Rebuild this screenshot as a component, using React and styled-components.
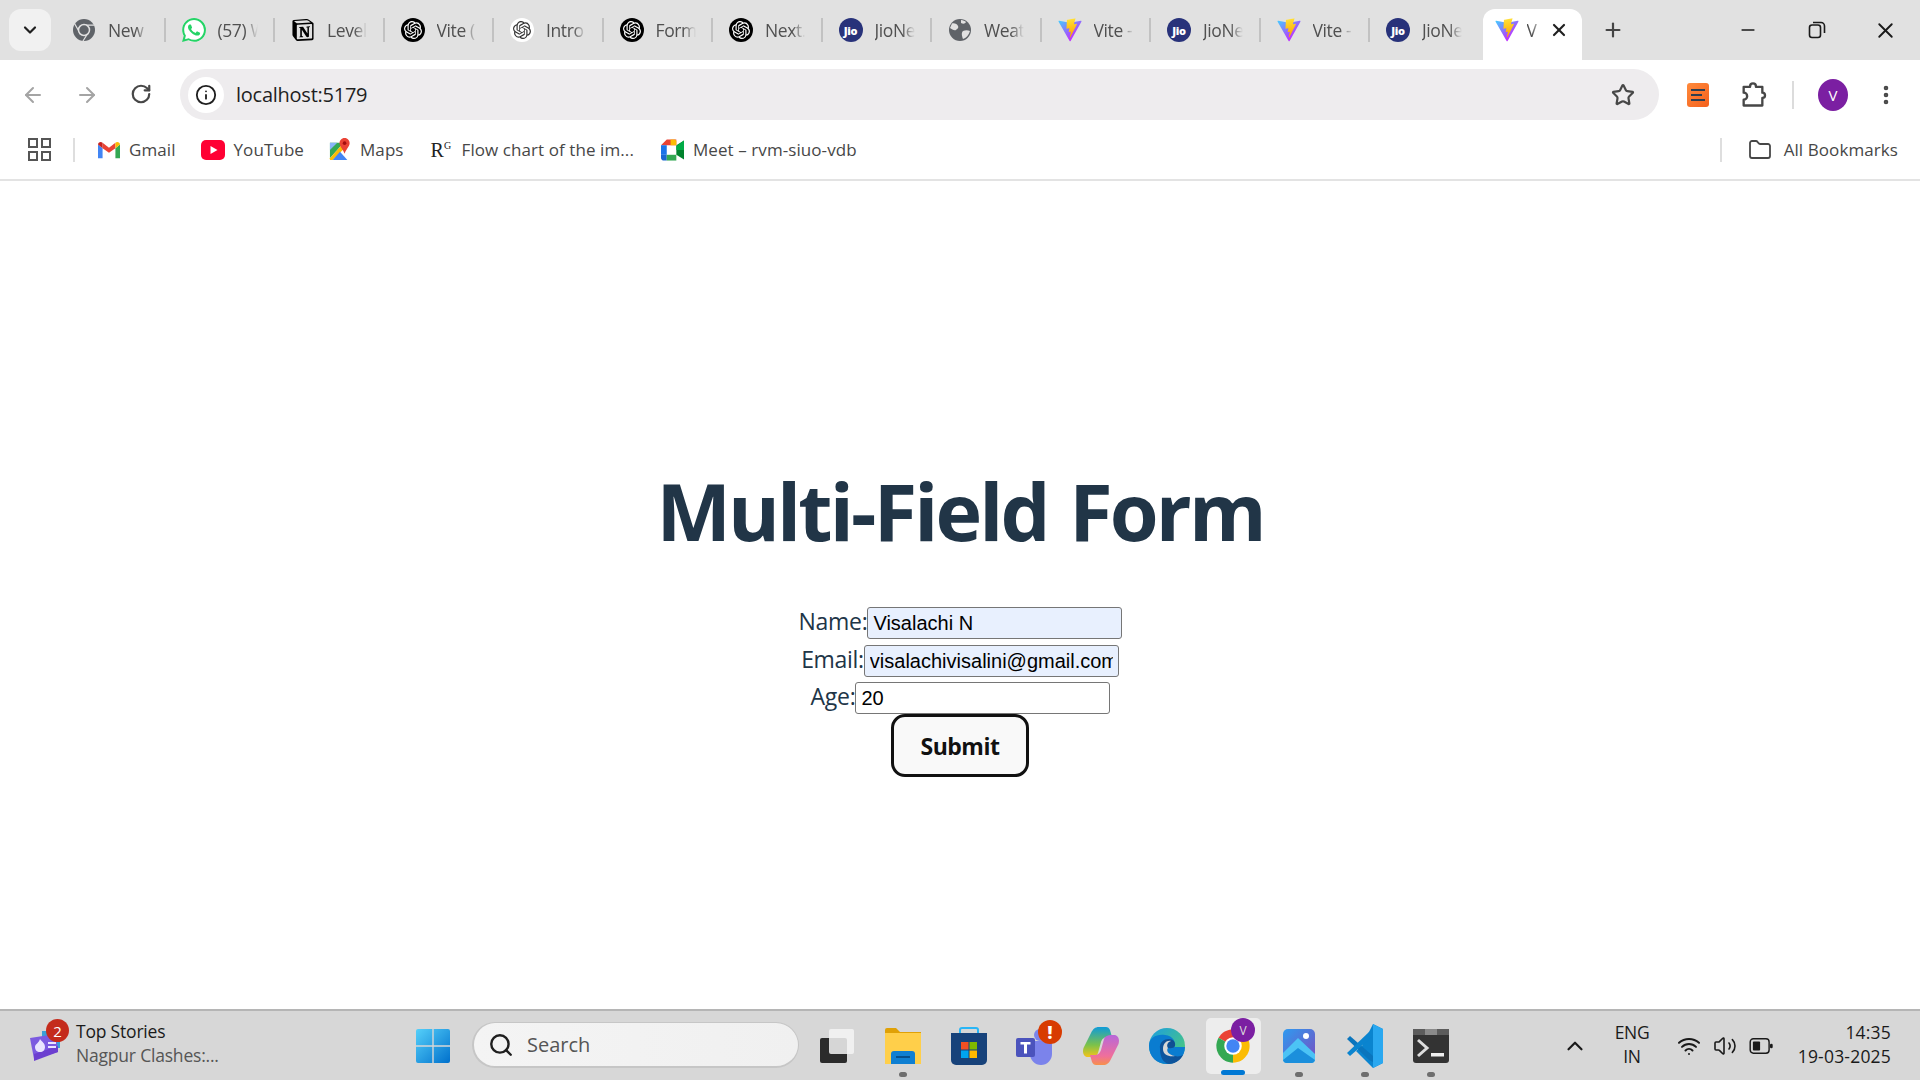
import React from 'react';
import styled, { createGlobalStyle } from 'styled-components';
import { ArrowLeft, ArrowRight, RotateCw, Star, Plus, X, Minus, ChevronDown, ChevronUp, Search, Wifi, Volume2, Info, Folder, MoreVertical } from 'lucide-react';
import { SiNotion, SiOpenai, SiWhatsapp } from 'react-icons/si';

const UI = '"Open Sans", "Noto Sans", sans-serif';

const Global = createGlobalStyle`
  html, body { margin: 0; padding: 0; background: #fff; overflow: hidden; }
  * { box-sizing: border-box; }
  body { font-family: ${UI}; }
`;

const Page = styled.div`
  width: 1920px; height: 1080px; display: flex; flex-direction: column; background: #fff;
`;

/* ---------- tab strip ---------- */
const TabStrip = styled.div`
  height: 60px; background: #e1e1e1; display: flex; align-items: flex-end; padding-left: 9px; flex: none;
`;
const Collapse = styled.div`
  width: 42px; height: 42px; margin: 0 5px 9px 0; border-radius: 12px; background: #f1f1f1;
  display: flex; align-items: center; justify-content: center; color: #1f1f1f;
`;
const Tab = styled.div`
  width: 107.5px; height: 60px; display: flex; align-items: center; padding: 0 0 0 16px; gap: 12px; flex: none;
`;
const TabSep = styled.div`
  width: 2px; height: 24px; margin-bottom: 18px; background: #c2c2c2; flex: none;
`;
const Fav = styled.span`
  width: 24px; height: 24px; flex: none; display: flex; align-items: center; justify-content: center; border-radius: 50%;
  background: ${p => p.$bg || 'transparent'}; color: ${p => p.$color || '#000'};
`;
const TabTitle = styled.span`
  width: 40px; overflow: hidden; white-space: nowrap; font-size: 17.5px; letter-spacing: -0.4px; color: #505050;
  -webkit-mask-image: linear-gradient(to right, #000 68%, transparent 100%);
  mask-image: linear-gradient(to right, #000 68%, transparent 100%);
`;
const JioMark = styled.span`
  font-size: 11px; font-weight: 800; color: #fff; letter-spacing: -0.3px; font-family: ${UI};
`;
const ActiveTab = styled.div`
  width: 99px; height: 51px; margin-left: 5px; background: #fff; border-radius: 12px 12px 0 0; display: flex; align-items: center;
  padding: 0 0 9px 12px; flex: none; color: #1f1f1f;
`;
const ActiveTitle = styled.span`
  width: 17px; margin-left: 8px; font-size: 17.5px; color: #505050; overflow: hidden;
  -webkit-mask-image: linear-gradient(to right, #000 30%, transparent 80%);
  mask-image: linear-gradient(to right, #000 30%, transparent 80%);
`;
const TabClose = styled.span`
  display: flex; margin-left: 5px;
`;
const NewTab = styled.span`
  display: flex; margin-left: 20px; margin-bottom: 19px; color: #444;
`;
const WinControls = styled.div`
  margin-left: auto; display: flex; align-self: stretch; align-items: center; color: #1a1a1a;
`;
const WinBtn = styled.span`
  width: 69px; display: flex; justify-content: center; align-items: center;
`;

/* ---------- toolbar ---------- */
const Toolbar = styled.div`
  height: 69px; display: flex; align-items: center; background: #fff; flex: none;
`;
const NavBtn = styled.span`
  width: 54px; display: flex; justify-content: center; color: ${p => p.$dim ? '#a4a4a4' : '#474747'};
`;
const NavGroup = styled.div`
  display: flex; width: 180px; padding-left: 6px; flex: none;
`;
const Omnibox = styled.div`
  width: 1479px; height: 51px; border-radius: 26px; background: #eeecee; display: flex; align-items: center; padding-left: 8px; flex: none;
`;
const InfoBubble = styled.span`
  width: 36px; height: 36px; border-radius: 50%; background: #fff; display: flex; justify-content: center; align-items: center; color: #1f1f1f;
`;
const Url = styled.span`
  margin-left: 12px; font-size: 20px; letter-spacing: -0.25px; color: #1f1f1f;
`;
const StarBtn = styled.span`
  margin-left: auto; margin-right: 24px; display: flex; color: #474747;
`;
const ToolIcons = styled.div`
  flex: 1; display: flex; align-items: center; color: #474747; padding-left: 28px;
`;
const ExtOrange = styled.span`
  width: 22px; height: 24px; border-radius: 3px; background: linear-gradient(135deg, #ff8a3c, #f4601c); display: flex; flex-direction: column; justify-content: center; gap: 3px; padding: 0 4px;
`;
const ExtLine = styled.i`
  display: block; height: 2px; width: ${p => p.$w}px; background: #2c3e50;
`;
const ToolSep = styled.span`
  width: 2px; height: 28px; background: #dcdcdc; margin: 0 24px 0 25px;
`;
const ExtPuzzle = styled.span`
  display: flex; margin-left: 30px;
`;
const Avatar = styled.span`
  width: 30px; height: 32px; border-radius: 50%; background: #7b1fa2; color: #fff; font-size: 15px; display: flex; align-items: center; justify-content: center;
`;
const Dots = styled.span`
  display: flex; margin-left: 26px; color: #474747;
`;

/* ---------- bookmarks ---------- */
const Bookmarks = styled.div`
  height: 52px; display: flex; align-items: center; background: #fff; border-bottom: 2px solid #e3e3e3; flex: none; padding: 0 22px 9px 28px;
`;
const AppsGrid = styled.span`
  display: grid; grid-template-columns: 10px 10px; grid-gap: 3px; margin-right: 22px;
`;
const AppsCell = styled.i`
  display: block; width: 10px; height: 10px; border: 2px solid #555;
`;
const BmSep = styled.span`
  width: 2px; height: 24px; background: #dedede; margin-right: ${p => p.$mr || 23}px;
`;
const Bm = styled.span`
  display: flex; align-items: center; gap: ${p => p.$gap || 9}px; margin-right: ${p => p.$mr || 0}px; font-size: 17px; letter-spacing: 0.08px; color: #474747; white-space: nowrap;
`;
const RG = styled.span`
  font-family: "Liberation Serif", serif; font-size: 20px; color: #222; letter-spacing: 0; line-height: 1; width: 22px;
`;
const RGSup = styled.sup`
  font-size: 10px; vertical-align: 8px; line-height: 0;
`;
const AllBm = styled.span`
  margin-left: auto; display: flex; align-items: center;
`;

/* ---------- page content ---------- */
const Main = styled.main`
  flex: 1; display: flex; flex-direction: column; align-items: center; padding-top: 286px; background: #fff; color: #213547;
`;
const Title = styled.h1`
  margin: 0 0 52px; font-size: 79px; line-height: 88px; font-weight: 700; letter-spacing: -2.85px; word-spacing: 4px; color: #213547; font-family: ${UI};
`;
const Row = styled.div`
  display: flex; align-items: center; justify-content: center; height: 32px; margin-bottom: ${p => p.$mb}px; padding-left: ${p => p.$pl || 0}px;
`;
const Label = styled.label`
  font-size: 23px; letter-spacing: -0.3px; color: #213547; margin-top: -4px;
`;
const Input = styled.input`
  width: 255px; height: 32px; border: 1.25px solid #767676; border-radius: 3px; padding: 1px 5px; font-size: 20px; font-family: "Liberation Sans", Arial, sans-serif; color: #000; background: ${p => p.$filled ? '#e8f0fe' : '#fff'}; outline: none;
`;
const SubmitBtn = styled.button`
  width: 138px; height: 63px; border: 3px solid #111; border-radius: 14px; background: #f9f9f9; font-size: 23px; font-weight: 700; letter-spacing: -0.5px; color: #111; font-family: ${UI}; padding: 0; flex: none;
`;

/* ---------- taskbar ---------- */
const Taskbar = styled.footer`
  height: 71px; background: #d7d7d7; border-top: 2px solid #b5b5b5; display: flex; align-items: center; flex: none;
`;
const Widget = styled.div`
  width: 400px; flex: none; display: flex; align-items: center; padding-left: 28px; position: relative;
`;
const WidgetBadge = styled.span`
  position: absolute; left: 46px; top: -5px; width: 23px; height: 23px; border-radius: 50%; background: #c42b1c; color: #fff; font-size: 15px; display: flex; align-items: center; justify-content: center;
`;
const WidgetText = styled.div`
  margin: -5px 0 0 12px; display: flex; flex-direction: column; line-height: 24px; font-size: 17.5px; letter-spacing: -0.2px;
`;
const WidgetTop = styled.span`
  color: #1a1a1a;
`;
const WidgetSub = styled.span`
  color: #555;
`;
const Slot = styled.div`
  width: 66px; height: 69px; flex: none; display: flex; align-items: center; justify-content: center; position: relative;
`;
const ActiveBg = styled.div`
  width: 55px; height: 56px; border-radius: 5px; background: #ededed; display: flex; align-items: center; justify-content: center;
`;
const SearchPill = styled.div`
  width: 327px; height: 46px; margin: -1px 5px 0 6px; border-radius: 23px; background: linear-gradient(to right, #f4f4f4, #f0f0f0); border-style: solid; border-color: #c6c6c6; border-width: 1px 1px 2px 2px; display: flex; align-items: center; padding-left: 14px; gap: 13px; font-size: 20px; color: #555; flex: none;
`;
const Dot = styled.i`
  position: absolute; bottom: 3px; left: 50%; margin-left: -4px; width: 8px; height: 5px; border-radius: 3px; background: #6e6e6e;
`;
const ActiveDot = styled.i`
  position: absolute; bottom: 5px; left: 50%; margin-left: -12px; width: 24px; height: 5px; border-radius: 3px; background: #0078d4;
`;
const Alert = styled.span`
  position: absolute; left: 36px; top: 9px; width: 24px; height: 24px; border-radius: 50%; background: #d83b01; color: #fff; font-size: 17px; font-weight: 800; display: flex; align-items: center; justify-content: center;
`;
const ChromeBadge = styled.span`
  position: absolute; left: 31px; top: 7px; width: 24px; height: 24px; border-radius: 50%; background: #7b1fa2; color: #ddd; font-size: 12px; display: flex; align-items: center; justify-content: center;
`;
const Tray = styled.div`
  flex: 1; display: flex; align-items: center; color: #1a1a1a;
`;
const TrayChevron = styled.span`
  display: flex; margin-left: 98px;
`;
const Lang = styled.div`
  margin: -4px 0 0 24px; width: 40px; display: flex; flex-direction: column; align-items: center; font-size: 17.5px; line-height: 24px; letter-spacing: -0.3px;
`;
const TrayIcons = styled.div`
  margin-left: 25px; display: flex; align-items: center; gap: 12px;
`;
const Clock = styled.div`
  margin: -4px 0 0 auto; padding-right: 29px; display: flex; flex-direction: column; align-items: flex-end; font-size: 17.5px; line-height: 24px; letter-spacing: 0.2px;
`;

/* ---------- drawn logos ---------- */
const ViteLogo = ({ size = 24, id }) => (
  <svg width={size} height={size} viewBox="0 0 410 404">
    <defs>
      <linearGradient id={id + 'a'} x1="6" y1="33" x2="235" y2="344" gradientUnits="userSpaceOnUse"><stop stopColor="#41D1FF" /><stop offset="1" stopColor="#BD34FE" /></linearGradient>
      <linearGradient id={id + 'b'} x1="194" y1="8" x2="236" y2="293" gradientUnits="userSpaceOnUse"><stop stopColor="#FFEA83" /><stop offset=".08" stopColor="#FFDD35" /><stop offset="1" stopColor="#FFA800" /></linearGradient>
    </defs>
    <path d="M399.641 59.5246L215.643 388.545C211.844 395.338 202.084 395.378 198.228 388.618L10.5817 59.5563C6.38087 52.1896 12.6802 43.2665 21.0281 44.7586L205.223 77.6824C206.398 77.8924 207.601 77.8904 208.776 77.6763L389.119 44.8058C397.439 43.2894 403.768 52.1434 399.641 59.5246Z" fill={`url(#${id}a)`} />
    <path d="M292.965 1.5744L156.801 28.2552C154.563 28.6937 152.906 30.5903 152.771 32.8664L144.395 174.33C144.198 177.662 147.258 180.248 150.51 179.498L188.42 170.749C191.967 169.931 195.172 173.055 194.443 176.622L183.18 231.775C182.422 235.487 185.907 238.661 189.532 237.56L212.947 230.446C216.577 229.344 220.065 232.527 219.297 236.242L201.398 322.875C200.278 328.294 207.486 331.249 210.492 326.603L212.5 323.5L323.454 102.072C325.312 98.3645 322.108 94.137 318.036 94.9228L279.014 102.454C275.347 103.161 272.227 99.746 273.262 96.1583L298.731 7.86689C299.767 4.27314 296.636 0.855181 292.965 1.5744Z" fill={`url(#${id}b)`} />
  </svg>
);

const ChromeMark = ({ size = 24 }) => (
  <svg width={size} height={size} viewBox="0 0 48 48">
    <path d="M24 24 L6.7 14 A20 20 0 0 1 41.3 14 Z" fill="#ea4335" />
    <path d="M24 24 L6.7 14 A20 20 0 0 0 24 44 Z" fill="#34a853" />
    <path d="M24 24 L41.3 14 A20 20 0 0 1 24 44 Z" fill="#fbbc04" />
    <circle cx="24" cy="24" r="10.5" fill="#fff" />
    <circle cx="24" cy="24" r="8" fill="#4285f4" />
  </svg>
);

const ChromeGray = () => (
  <svg width="24" height="24" viewBox="0 0 48 48">
    <circle cx="24" cy="24" r="22" fill="#5f6368" />
    <path d="M24 14 H45 M15.3 29 L5 11 M32.7 29 L22 46" stroke="#e1e1e1" strokeWidth="2.5" />
    <circle cx="24" cy="24" r="11" fill="#5f6368" stroke="#e1e1e1" strokeWidth="3" />
  </svg>
);

const Puzzle = () => (
  <svg width="28" height="28" viewBox="0 0 24 24" fill="none" stroke="#474747" strokeWidth="2" strokeLinejoin="round">
    <path d="M4 5 H9.5 V4.5 a2.5 2.5 0 0 1 5 0 V5 H20 V10 a2.3 2.3 0 0 1 0 4.6 V21 H4 V16 a3 3 0 0 0 0-6 Z" />
  </svg>
);

const Globe = () => (
  <svg width="24" height="24" viewBox="0 0 24 24">
    <circle cx="12" cy="12" r="11" fill="#5f6368" />
    <path d="M4 5.5 C7 5 9 6 10 8 C11 10 9 11 8 12 C6 13 4 11 2 10 Z M15 13 C17 12 20 12 22 13 C21 17 18 20 15 21 C14 18 13 15 15 13 Z M13 2 C15 2 17 3 18 4 C17 6 15 6 13 5 Z" fill="#e1e1e1" />
  </svg>
);

const OpenAiFav = ({ invert }) => (
  <Fav $bg={invert ? '#fff' : '#000'} $color={invert ? '#333' : '#fff'}><SiOpenai size={18} /></Fav>
);
const Jio = () => <Fav $bg="#28327a"><JioMark>Jio</JioMark></Fav>;

const GmailLogo = () => (
  <svg width="22" height="18" viewBox="0 0 24 18">
    <path d="M0 3 L0 18 L5 18 L5 7 Z" fill="#4285f4" />
    <path d="M24 3 L24 18 L19 18 L19 7 Z" fill="#34a853" />
    <path d="M5 7 L12 12 L19 7 L19 1 L12 6.5 L5 1 Z" fill="#ea4335" />
    <path d="M0 3 C0 0.5 3 -0.5 5 1 L5 7 Z" fill="#c5221f" />
    <path d="M24 3 C24 0.5 21 -0.5 19 1 L19 7 Z" fill="#fbbc04" />
  </svg>
);
const YouTubeLogo = () => (
  <svg width="24" height="20" viewBox="0 0 24 20">
    <rect width="24" height="20" rx="5" fill="#ff0033" />
    <path d="M9.5 6 L16.5 10 L9.5 14 Z" fill="#fff" />
  </svg>
);
const MapsLogo = () => (
  <svg width="22" height="24" viewBox="0 0 24 26">
    <path d="M1 5 H16 L1 22 Z" fill="#34a853" />
    <path d="M16 5 L1 22 V24 H4 L20 8 Z" fill="#fbbc04" />
    <path d="M4 24 L12 15 L20 24 Z" fill="#4285f4" />
    <path d="M1 5 H9 L1 13 Z" fill="#8ab4f8" />
    <path d="M17 0 C13.5 0 11.5 3 11.5 5.5 C11.5 9 16 13 17 17 C18 13 22.5 9 22.5 5.5 C22.5 3 20.5 0 17 0 Z" fill="#ea4335" />
    <circle cx="17" cy="5.5" r="2" fill="#a50e0e" />
  </svg>
);
const MeetLogo = () => (
  <svg width="23" height="22" viewBox="0 0 24 22">
    <path d="M0 6 L6 0 H16 V6 H6 Z" fill="#ea4335" />
    <path d="M0 6 H6 V16 H0 Z" fill="#1a73e8" />
    <path d="M0 16 H6 V22 H3 C1.3 22 0 20.7 0 19 Z" fill="#1967d2" />
    <path d="M6 16 H16 V22 H6 Z" fill="#34a853" />
    <path d="M16 6 L24 1 V21 L16 16 Z" fill="#00832d" />
    <path d="M10 0 H14 C15.1 0 16 .9 16 2 V6 H10 Z" fill="#fbbc04" />
    <path d="M16 7 L24 1 V11 H16 Z" fill="#00ac47" />
  </svg>
);
const WidgetsIcon = () => (
  <svg width="36" height="36" viewBox="0 0 36 36">
    <path d="M14 3 L32 3 L32 20 L14 20 Z" fill="#3aa0d8" />
    <path d="M2 10 L28 6 L30 24 L6 31 Z" fill="#7b5ae0" />
    <path d="M6 26 L30 18 L30 24 L6 33 Z" fill="#6c3fd0" />
    <path d="M12 11 C14 14 17 15 17 19 C17 22 15 24 12 24 C9 24 7 22 7 19 C7 16 11 15 12 11 Z" fill="#e9e4ff" />
    <path d="M20 15 H28 M20 19 H28" stroke="#e9e4ff" strokeWidth="2" />
  </svg>
);
const WinLogo = () => (
  <svg width="36" height="36" viewBox="0 0 36 36">
    <defs><linearGradient id="winl" x1="0" y1="0" x2="1" y2="1"><stop stopColor="#55d0fa" /><stop offset="1" stopColor="#0070cc" /></linearGradient></defs>
    <path d="M1 3 a2 2 0 0 1 2-2 H17.3 V17.3 H1 Z M18.7 1 H33 a2 2 0 0 1 2 2 V17.3 H18.7 Z M1 18.7 H17.3 V35 H3 a2 2 0 0 1-2-2 Z M18.7 18.7 H35 V33 a2 2 0 0 1-2 2 H18.7 Z" fill="url(#winl)" />
  </svg>
);
const TaskView = () => (
  <svg width="36" height="36" viewBox="0 0 36 36">
    <rect x="1" y="10" width="27" height="25" rx="2" fill="#2b2b2b" />
    <rect x="10" y="1" width="25" height="25" rx="2" fill="#f4f4f4" opacity=".85" />
  </svg>
);
const FilesIcon = () => (
  <svg width="38" height="38" viewBox="0 0 38 38">
    <path d="M1 3 a2 2 0 0 1 2-2 H12 L16 5 H37 V10 H1 Z" fill="#e0a106" />
    <rect x="1" y="6" width="36" height="31" fill="#ffcf4a" />
    <path d="M7 37 V27 a3 3 0 0 1 3-3 H28 a3 3 0 0 1 3 3 V37 Z" fill="#0f7fd2" />
    <rect x="12" y="29" width="14" height="2" fill="#064f8c" />
  </svg>
);
const StoreIcon = () => (
  <svg width="36" height="38" viewBox="0 0 36 38">
    <path d="M9 8 V3 a2 2 0 0 1 2-2 H25 a2 2 0 0 1 2 2 V8" fill="none" stroke="#29b6f6" strokeWidth="2" />
    <path d="M0 6 H36 V33 a5 5 0 0 1-5 5 H5 a5 5 0 0 1-5-5 Z" fill="#17427a" />
    <rect x="10" y="15" width="7.5" height="7.5" fill="#f25022" />
    <rect x="18.5" y="15" width="7.5" height="7.5" fill="#7fba00" />
    <rect x="10" y="23.5" width="7.5" height="7.5" fill="#00a4ef" />
    <rect x="18.5" y="23.5" width="7.5" height="7.5" fill="#ffb900" />
  </svg>
);
const TeamsIcon = () => (
  <svg width="38" height="38" viewBox="0 0 38 38">
    <circle cx="24" cy="8" r="6" fill="#7b83eb" />
    <path d="M10 14 H36 V27 a11 11 0 0 1-11 11 a11 11 0 0 1-11-11 Z" fill="#7b83eb" />
    <rect x="0" y="11" width="19" height="19" rx="2" fill="#4b53bc" />
    <path d="M4.5 15 H14.5 V17.5 H11 V26.5 H8 V17.5 H4.5 Z" fill="#fff" />
  </svg>
);
const CopilotIcon = () => (
  <svg width="36" height="38" viewBox="0 0 36 38">
    <defs>
      <linearGradient id="cop1" x1="0" y1="0" x2="0" y2="1"><stop stopColor="#0f9bd8" /><stop offset=".6" stopColor="#7cc24a" /><stop offset="1" stopColor="#f4c41a" /></linearGradient>
      <linearGradient id="cop2" x1="0" y1="0" x2="0" y2="1"><stop stopColor="#b767d9" /><stop offset=".7" stopColor="#ef6f9c" /><stop offset="1" stopColor="#f7904a" /></linearGradient>
    </defs>
    <path d="M16 0 H23 C25 0 26 1 27 3 L29 10 H25 C21 10 19 12 18 15 L15 26 C14 29 11 30 8 30 H5 C1 30 -1 26 0.5 21 L8 6 C10 2 12 0 16 0 Z" fill="url(#cop1)" />
    <path d="M20 38 H13 C11 38 10 37 9 35 L7 28 H11 C15 28 17 26 18 23 L21 12 C22 9 25 8 28 8 H31 C35 8 37 12 35.5 17 L28 32 C26 36 24 38 20 38 Z" fill="url(#cop2)" />
  </svg>
);
const EdgeIcon = () => (
  <svg width="38" height="38" viewBox="0 0 38 38">
    <defs>
      <linearGradient id="edg1" x1="0" y1="1" x2="1" y2="0"><stop stopColor="#0c59a4" /><stop offset="1" stopColor="#114a8b" /></linearGradient>
      <linearGradient id="edg2" x1="0" y1="0" x2="1" y2="1"><stop stopColor="#1b9de2" /><stop offset="1" stopColor="#54d16b" /></linearGradient>
    </defs>
    <circle cx="19" cy="19" r="18" fill="url(#edg2)" />
    <path d="M1 19 C1 10 9 7 17 8 C25 9 29 15 25 20 C28 20 37 20 37 20 C37 30 29 37 19 37 C9 37 1 30 1 19 Z" fill="#0a7cd0" />
    <path d="M12 22 C11 15 16 12 21 12 C25 12 28 15 27 19 C26 22 21 21 20 21 C18 23 20 28 27 29 C30 30 33 29 35 28 C32 34 26 37 21 37 C15 36 12 30 12 22 Z" fill="url(#edg1)" />
    <path d="M15 22 C15 16 19 13 23 14 C20 15 18 18 20 21 C18 23 20 28 27 29 C21 30 15 28 15 22 Z" fill="#d7d7d7" />
  </svg>
);
const PhotosIcon = () => (
  <svg width="32" height="34" viewBox="0 0 32 34">
    <defs><linearGradient id="ph" x1="0" y1="0" x2="1" y2="1"><stop stopColor="#2e9bf0" /><stop offset="1" stopColor="#7a4cc0" /></linearGradient></defs>
    <rect width="32" height="34" rx="5" fill="url(#ph)" />
    <circle cx="23" cy="7" r="3" fill="#fff" />
    <path d="M0 24 L15 9 L32 25 V30 a4 4 0 0 1-4 4 H4 a4 4 0 0 1-4-4 Z" fill="#4cc3f5" />
    <path d="M0 31 L15 19 L32 31 a4 4 0 0 1-4 3 H4 a4 4 0 0 1-4-3 Z" fill="#1b8fdc" />
  </svg>
);
const VSCodeIcon = () => (
  <svg width="36" height="44" viewBox="0 0 36 44">
    <path d="M26 0 L36 5 V39 L26 44 L9 27 L15 22 Z" fill="#0a84cf" />
    <path d="M26 0 L36 5 V39 L26 44 Z" fill="#2aa8f0" />
    <path d="M0 15 L3 12 L26 32 V38 L22 36 Z" fill="#0a75bd" />
    <path d="M0 29 L3 32 L26 12 V6 L22 8 Z" fill="#0a84cf" />
  </svg>
);
const TerminalIcon = () => (
  <svg width="36" height="34" viewBox="0 0 36 34">
    <path d="M0 3 a3 3 0 0 1 3-3 H33 a3 3 0 0 1 3 3 V31 a3 3 0 0 1-3 3 H3 a3 3 0 0 1-3-3 Z" fill="#333" />
    <rect x="0" y="0" width="12" height="6" fill="#5c5c5c" /><rect x="12" y="0" width="12" height="6" fill="#8a8a8a" /><rect x="24" y="0" width="12" height="6" fill="#5c5c5c" />
    <path d="M5 11 L14 19 L5 27" fill="none" stroke="#ddd" strokeWidth="3" />
    <rect x="18" y="24" width="13" height="3.5" fill="#eee" />
  </svg>
);
const Battery = () => (
  <svg width="24" height="18" viewBox="0 0 26 20">
    <rect x="1" y="2" width="21" height="16" rx="3.5" fill="none" stroke="#1a1a1a" strokeWidth="1.6" />
    <rect x="4" y="5" width="8" height="10" rx="1" fill="#1a1a1a" />
    <rect x="23" y="7.5" width="3" height="5" rx="1.5" fill="#1a1a1a" />
  </svg>
);

const tabs = [
  [<ChromeGray />, 'New'],
  [<Fav $bg="#fff" $color="#25d366"><SiWhatsapp size={24} /></Fav>, '(57) W'],
  [<Fav><SiNotion size={22} /></Fav>, 'Level'],
  [<OpenAiFav />, 'Vite ('],
  [<OpenAiFav invert />, 'Intro'],
  [<OpenAiFav />, 'Form'],
  [<OpenAiFav />, 'Next.'],
  [<Jio />, 'JioNe'],
  [<Globe />, 'Weat'],
  [<ViteLogo id="v1" />, 'Vite -'],
  [<Jio />, 'JioNe'],
  [<ViteLogo id="v2" />, 'Vite -'],
  [<Jio />, 'JioNe'],
];

export default function App() {
  return (
    <Page>
      <Global />
      <TabStrip>
        <Collapse><ChevronDown size={20} strokeWidth={2.6} /></Collapse>
        {tabs.map(([icon, title], i) => (
          <React.Fragment key={i}>
            <Tab>{icon}<TabTitle>{title}</TabTitle></Tab>
            {i < 12 && <TabSep />}
          </React.Fragment>
        ))}
        <ActiveTab>
          <ViteLogo id="v3" />
          <ActiveTitle>V</ActiveTitle>
          <TabClose><X size={20} strokeWidth={2.6} /></TabClose>
        </ActiveTab>
        <NewTab><Plus size={22} strokeWidth={2.4} /></NewTab>
        <WinControls>
          <WinBtn><Minus size={20} strokeWidth={2} /></WinBtn>
          <WinBtn>
            <svg width="18" height="18" viewBox="0 0 18 18" fill="none" stroke="#1a1a1a" strokeWidth="1.6"><rect x="1.5" y="4" width="11" height="12.5" rx="2.5" /><path d="M5 1.5 H13 a3.5 3.5 0 0 1 3.5 3.5 V12" /></svg>
          </WinBtn>
          <WinBtn><X size={25} strokeWidth={1.8} /></WinBtn>
        </WinControls>
      </TabStrip>

      <Toolbar>
        <NavGroup>
          <NavBtn $dim><ArrowLeft size={24} strokeWidth={2} /></NavBtn>
          <NavBtn $dim><ArrowRight size={24} strokeWidth={2} /></NavBtn>
          <NavBtn><RotateCw size={22} strokeWidth={2.4} /></NavBtn>
        </NavGroup>
        <Omnibox>
          <InfoBubble><Info size={22} strokeWidth={2} /></InfoBubble>
          <Url>localhost:5179</Url>
          <StarBtn><Star size={24} strokeWidth={2.2} /></StarBtn>
        </Omnibox>
        <ToolIcons>
          <ExtOrange><ExtLine $w={14} /><ExtLine $w={11} /><ExtLine $w={14} /></ExtOrange>
          <ExtPuzzle><Puzzle /></ExtPuzzle>
          <ToolSep />
          <Avatar>V</Avatar>
          <Dots><MoreVertical size={24} strokeWidth={2.6} /></Dots>
        </ToolIcons>
      </Toolbar>

      <Bookmarks>
        <AppsGrid><AppsCell /><AppsCell /><AppsCell /><AppsCell /></AppsGrid>
        <BmSep />
        <Bm $mr={25}><GmailLogo />Gmail</Bm>
        <Bm $mr={25}><YouTubeLogo />YouTube</Bm>
        <Bm $mr={27}><MapsLogo />Maps</Bm>
        <Bm $mr={27}><RG>R<RGSup>G</RGSup></RG>Flow chart of the im...</Bm>
        <Bm><MeetLogo />Meet – rvm-siuo-vdb</Bm>
        <AllBm>
          <BmSep $mr={26} />
          <Bm $gap={12}><Folder size={24} strokeWidth={1.8} />All Bookmarks</Bm>
        </AllBm>
      </Bookmarks>

      <Main>
        <Title>Multi-Field Form</Title>
        <Row $mb={6} $pl={1}><Label>Name:</Label><Input $filled readOnly value="Visalachi N" /></Row>
        <Row $mb={5}><Label>Email:</Label><Input $filled readOnly value="visalachivisalini@gmail.com" /></Row>
        <Row $mb={0} $pl={1}><Label>Age:</Label><Input readOnly value="20" /></Row>
        <SubmitBtn>Submit</SubmitBtn>
      </Main>

      <Taskbar>
        <Widget>
          <WidgetsIcon />
          <WidgetBadge>2</WidgetBadge>
          <WidgetText><WidgetTop>Top Stories</WidgetTop><WidgetSub>Nagpur Clashes:...</WidgetSub></WidgetText>
        </Widget>
        <Slot><WinLogo /></Slot>
        <SearchPill><Search size={26} strokeWidth={2.2} color="#1f1f1f" />Search</SearchPill>
        <Slot><TaskView /></Slot>
        <Slot><FilesIcon /><Dot /></Slot>
        <Slot><StoreIcon /></Slot>
        <Slot><TeamsIcon /><Alert>!</Alert></Slot>
        <Slot><CopilotIcon /></Slot>
        <Slot><EdgeIcon /></Slot>
        <Slot><ActiveBg><ChromeMark size={40} /></ActiveBg><ChromeBadge>V</ChromeBadge><ActiveDot /></Slot>
        <Slot><PhotosIcon /><Dot /></Slot>
        <Slot><VSCodeIcon /><Dot /></Slot>
        <Slot><TerminalIcon /><Dot /></Slot>
        <Tray>
          <TrayChevron><ChevronUp size={26} strokeWidth={2} /></TrayChevron>
          <Lang><span>ENG</span><span>IN</span></Lang>
          <TrayIcons><Wifi size={24} strokeWidth={2} /><Volume2 size={24} strokeWidth={1.6} /><Battery /></TrayIcons>
          <Clock><span>14:35</span><span>19-03-2025</span></Clock>
        </Tray>
      </Taskbar>
    </Page>
  );
}
